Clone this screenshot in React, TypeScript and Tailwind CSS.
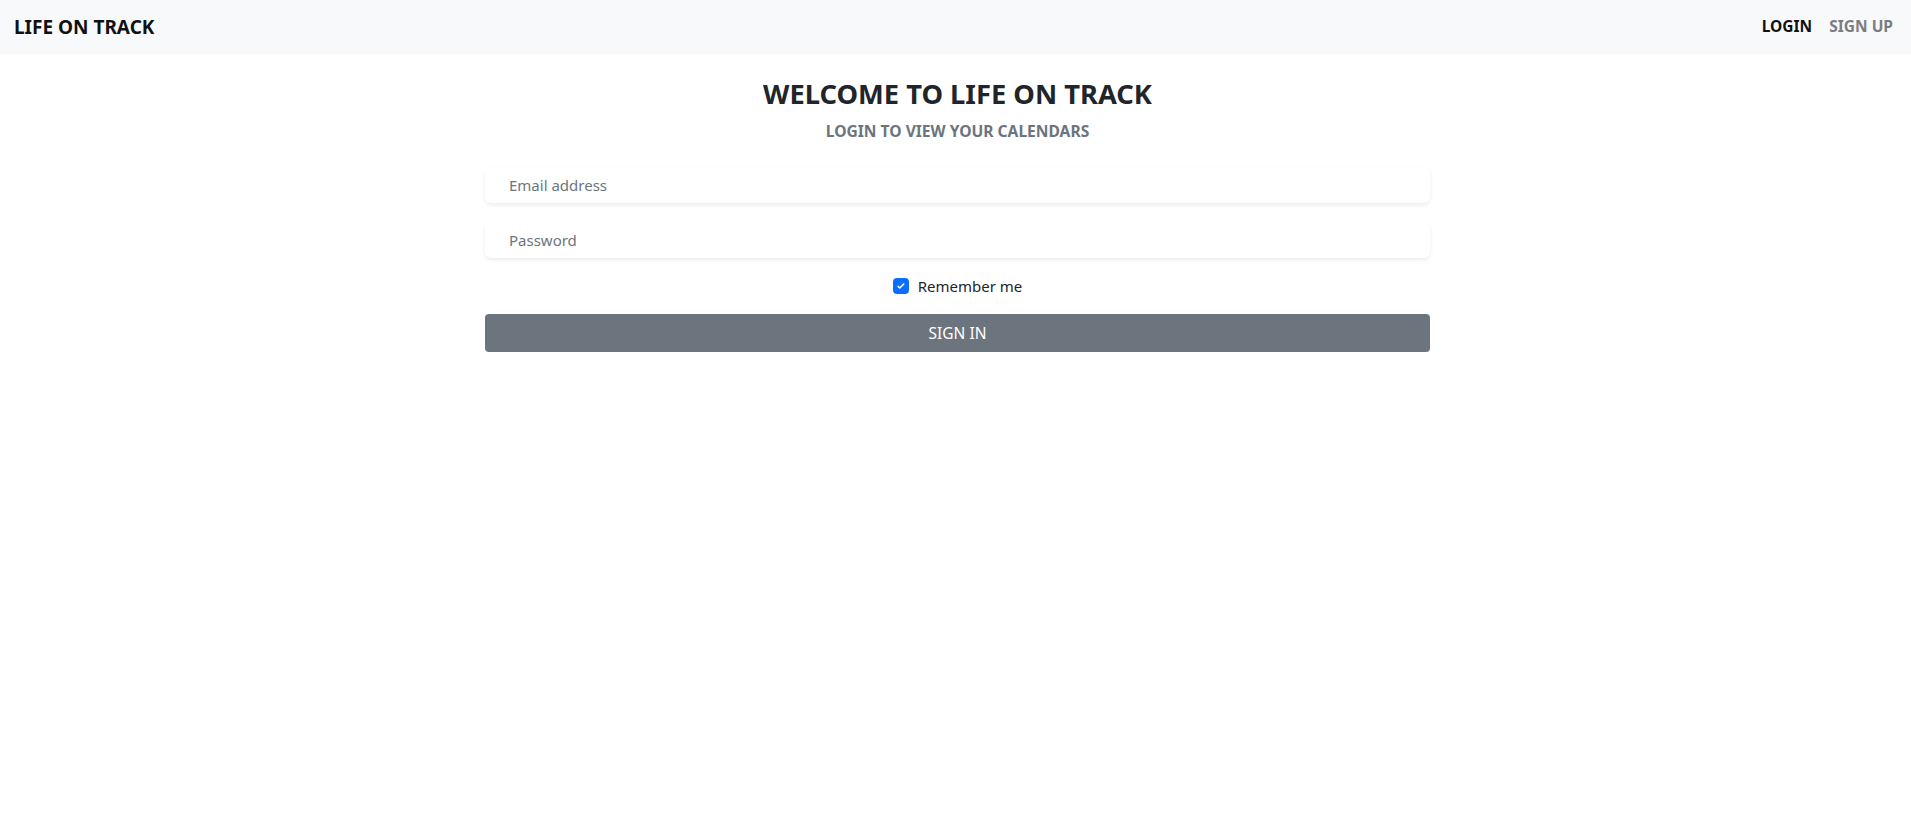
import React, { useState } from "react";

const font = { fontFamily: '"Noto Sans", "Open Sans", sans-serif' };

const App: React.FC = () => {
  const [remember, setRemember] = useState(true);

  return (
    <div className="min-h-[813px] bg-white text-[#212529]" style={font}>
      {/* top bar */}
      <nav className="h-[54px] bg-[#f8f9fa] flex items-center justify-between pl-[14px] pr-[18px]">
        <span className="text-[19px] font-bold text-[#111] leading-none">LIFE ON TRACK</span>
        <div className="flex items-center gap-[17px] text-[15.5px] font-bold leading-none">
          <a className="text-[#111]">LOGIN</a>
          <a className="text-[#7a7d80]">SIGN UP</a>
        </div>
      </nav>

      <main className="flex flex-col items-center pl-[4px]">
        <h3 className="mt-[24px] text-[27.3px] leading-[1.2] font-bold text-[#212529]">
          WELCOME TO LIFE ON TRACK
        </h3>
        <h6 className="mt-[11px] text-[15.6px] leading-[1.2] font-bold text-[#6c757d]">
          LOGIN TO VIEW YOUR CALENDARS
        </h6>

        <form className="w-[945px] mt-[27px] flex flex-col" onSubmit={(e) => e.preventDefault()}>
          <input
            type="email"
            placeholder="Email address"
            className="h-[36px] rounded-[6px] bg-white px-[24px] text-[15px] shadow-[0_2px_4px_rgba(0,0,0,0.08)] outline-none placeholder:text-[#6c757d]"
          />
          <input
            type="password"
            placeholder="Password"
            className="mt-[19px] h-[36px] rounded-[6px] bg-white px-[24px] text-[15px] shadow-[0_2px_4px_rgba(0,0,0,0.08)] outline-none placeholder:text-[#6c757d]"
          />

          <label className="mt-[20px] flex items-center justify-center gap-[9px] text-[15px] leading-none text-[#212529]">
            <span
              onClick={() => setRemember(!remember)}
              className={`w-[16px] h-[16px] rounded-[4px] flex items-center justify-center ${
                remember ? "bg-[#0d6efd]" : "bg-white border border-[#ccc]"
              }`}
            >
              {remember && (
                <svg width="10" height="10" viewBox="0 0 20 20">
                  <path d="M4 10.5l3.5 3.5 8-8" fill="none" stroke="#fff" strokeWidth="3" strokeLinecap="round" strokeLinejoin="round" />
                </svg>
              )}
            </span>
            Remember me
          </label>

          <button
            type="submit"
            className="mt-[20px] h-[38px] rounded-[4px] bg-[#6c757d] text-white text-[15.5px]"
          >
            SIGN IN
          </button>
        </form>
      </main>
    </div>
  );
};

export default App;
